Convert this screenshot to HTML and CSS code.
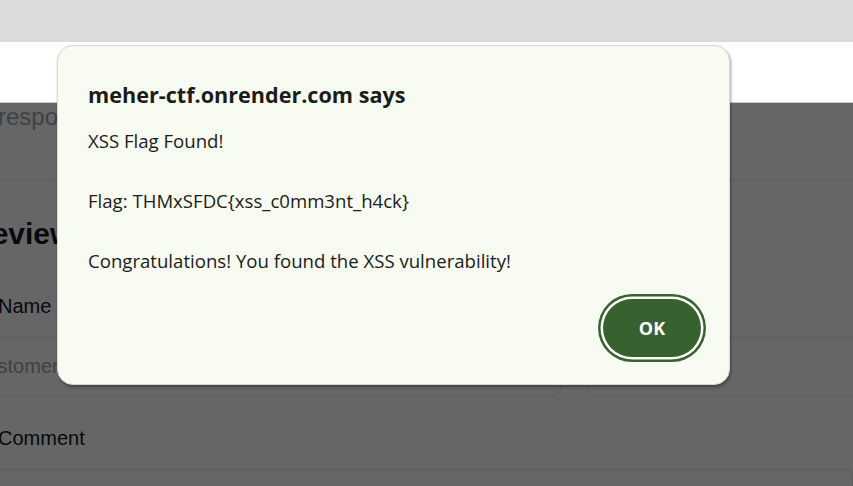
FILE: index.html
```html
<!DOCTYPE html>
<html lang="en">
<head>
<meta charset="utf-8">
<title>meher-ctf</title>
<link rel="stylesheet" href="styles.css">
</head>
<body>
<div class="tabs"></div>
<div class="toolbar"></div>
<div class="viewport">
  <div class="page">
    <p class="note">responses are reviewed within 24 hours.</p>
    <section class="review">
      <h2 class="heading">Review</h2>
      <div class="row">
        <div class="field">
          <label class="label">Name</label>
          <div class="input"><span class="placeholder">Customer name</span></div>
        </div>
        <div class="field">
          <label class="label">Email</label>
          <div class="input"></div>
        </div>
      </div>
      <div class="field">
        <label class="label">Comment</label>
        <div class="textarea"></div>
      </div>
    </section>
  </div>
  <div class="overlay"></div>
</div>
<div class="dialog" role="alertdialog">
  <h1 class="dialog-title">meher-ctf.onrender.com says</h1>
  <p class="dialog-msg">XSS Flag Found!

Flag: THMxSFDC{xss_c0mm3nt_h4ck}

Congratulations! You found the XSS vulnerability!</p>
  <div class="dialog-actions">
    <button class="ok">OK</button>
  </div>
</div>
</body>
</html>
```
FILE: styles.css
```css
html, body {
  margin: 0;
  padding: 0;
  width: 853px;
  height: 486px;
  overflow: hidden;
  background: #ffffff;
  font-family: "Liberation Sans", Arial, sans-serif;
}

.tabs {
  height: 42px;
  background: #dadbdd;
}

.toolbar {
  height: 60px;
  background: #ffffff;
  border-bottom: 1px solid #c9c9c9;
}

.viewport {
  position: relative;
  height: 383px;
  overflow: hidden;
  background: #ffffff;
}

.page {
  margin-left: -2px;
}

.note {
  margin: 0;
  padding-top: 1px;
  font-size: 24px;
  line-height: 26px;
  color: #9ca3af;
  white-space: nowrap;
}

.review {
  margin-top: 49px;
  border-top: 1px solid #e5e7eb;
}

.heading {
  margin: 34px 0 0 -28px;
  font-size: 30px;
  line-height: 40px;
  font-weight: bold;
  color: #111827;
}

.row {
  display: grid;
  grid-template-columns: 563px 320px;
  gap: 46px;
  margin-top: 40px;
}

.field {
  display: flex;
  flex-direction: column;
}

.label {
  font-size: 20px;
  line-height: 24px;
  font-weight: 500;
  color: #111827;
  padding-bottom: 19px;
}

.input {
  height: 57px;
  border: 1px solid #e5e7eb;
  border-radius: 8px;
  display: flex;
  align-items: center;
  margin-left: -20px;
}

.placeholder {
  font-size: 20px;
  color: #9ca3af;
  margin-left: -7px;
}

.row + .field {
  margin-top: 30px;
}

.textarea {
  height: 120px;
  border: 1px solid #e5e7eb;
  border-radius: 8px;
  margin-left: -20px;
}

.overlay {
  position: absolute;
  inset: 0;
  background: rgba(0, 0, 0, 0.6);
}

.dialog {
  position: absolute;
  left: 57px;
  top: 45px;
  width: 673px;
  height: 340px;
  box-sizing: border-box;
  padding: 34px 23px 22px 30px;
  background: #f8fbf1;
  border: 1px solid #d6d8d2;
  border-radius: 16px;
  box-shadow: 1px 2px 3px rgba(0, 0, 0, 0.35);
  display: flex;
  flex-direction: column;
  font-family: "Open Sans", "Noto Sans", sans-serif;
  color: #1a1c18;
}

.dialog-title {
  margin: 0;
  font-size: 21.6px;
  line-height: 30px;
  font-weight: 700;
}

.dialog-msg {
  margin: 16px 0 0;
  font-size: 18.6px;
  line-height: 30px;
  white-space: pre-wrap;
}

.dialog-actions {
  margin-top: auto;
  display: flex;
  justify-content: flex-end;
}

.ok {
  width: 98px;
  height: 58px;
  margin: 5px;
  border: none;
  border-radius: 29px;
  background: #386130;
  color: #ffffff;
  font-family: "Open Sans", "Noto Sans", sans-serif;
  font-size: 18px;
  font-weight: 700;
  box-shadow: 0 0 0 2.5px #ffffff, 0 0 0 5px #386130;
}
```
